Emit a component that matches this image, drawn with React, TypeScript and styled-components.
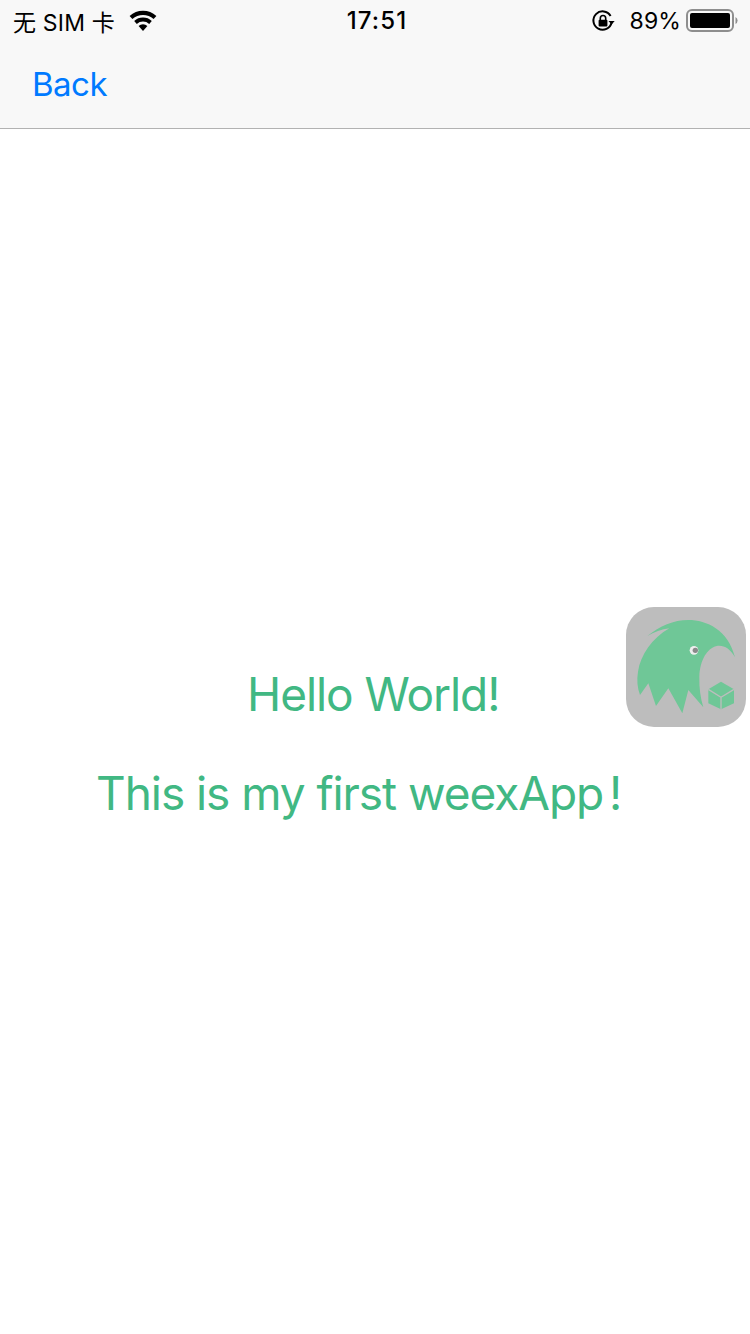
import React from "react";
import styled, { createGlobalStyle } from "styled-components";

const Global = createGlobalStyle`
  html, body { margin: 0; padding: 0; background: #fff; }
  body { font-family: Inter, "Noto Sans CJK SC", sans-serif; }
`;

const Page = styled.div`
  position: relative;
  width: 750px;
  height: 1334px;
  overflow: hidden;
  background: #fff;
`;

const Header = styled.header`
  background: #f8f8f8;
  border-bottom: 1px solid #b2b2b2;
  height: 128px;
`;

const StatusBar = styled.div`
  height: 41px;
  display: grid;
  grid-template-columns: 1fr auto 1fr;
  align-items: center;
  padding: 0 12px 0 13px;
  color: #000;
  font-size: 23px;
`;

const StatusLeft = styled.div`
  display: flex;
  align-items: center;
  gap: 13px;
`;

const Carrier = styled.span`
  font-family: Inter, "Noto Sans CJK SC", sans-serif;
  font-size: 23px;
  letter-spacing: 0.2px;
  white-space: pre;
`;

const Clock = styled.span`
  font-size: 24px;
  font-weight: 500;
  letter-spacing: 1.1px;
  margin-left: 3px;
`;

const StatusRight = styled.div`
  display: flex;
  align-items: center;
  justify-content: flex-end;
`;

const Percent = styled.span`
  font-size: 23px;
  letter-spacing: 0.1px;
  margin: 0 5px 0 15px;
`;

const NavBar = styled.nav`
  height: 87px;
  display: flex;
  align-items: center;
  padding-left: 32px;
`;

const BackLink = styled.a`
  color: #007aff;
  font-size: 33px;
  line-height: 87px;
  letter-spacing: -0.5px;
`;

const Content = styled.main`
  display: flex;
  flex-direction: column;
  padding-top: 535px;
`;

const Line = styled.p<{ $indent: number }>`
  margin: 0 0 39px;
  padding-left: ${(p) => p.$indent}px;
  color: #41b883;
  font-size: 46px;
  line-height: 60px;
  font-weight: 380;
  letter-spacing: -1.05px;
  white-space: nowrap;
`;

const TightTail = styled.span`
  word-spacing: -6px;
`;

const FloatingTile = styled.div`
  position: absolute;
  left: 626px;
  top: 607px;
  width: 120px;
  height: 120px;
  border-radius: 28px;
  background: #bdbdbd;
`;

const Wifi = () => (
  <svg width="30" height="22" viewBox="0 0 30 22" fill="#000">
    <path d="M15 21 l-4.4-5 a6.4 6.4 0 0 1 8.8 0z" />
    <path d="M8.8 13.9 L6.2 11 a13 13 0 0 1 17.6 0 l-2.6 2.9 a9.3 9.3 0 0 0-12.4 0z" />
    <path d="M4.4 9 L1.6 5.9 a20 20 0 0 1 26.8 0 L25.6 9 a16 16 0 0 0-21.2 0z" />
  </svg>
);

const RotationLock = () => (
  <svg width="24" height="24" viewBox="0 0 24 24" fill="none" stroke="#000">
    <path d="M20.6 13.5 A9.2 9.2 0 1 1 19.6 7" strokeWidth="2" />
    <path d="M17.5 12 h6.2 l-3.1 3.6z" fill="#000" stroke="none" />
    <path d="M9.3 11 V9.2 a2.7 2.7 0 0 1 5.4 0 V11" strokeWidth="1.6" />
    <rect x="7.6" y="10.8" width="8.8" height="6.8" rx="1" fill="#000" stroke="none" />
  </svg>
);

const Battery = () => (
  <svg width="52" height="25" viewBox="0 0 52 25">
    <rect x="1" y="2" width="46" height="21" rx="5" fill="none" stroke="#8e8e8e" strokeWidth="2" />
    <rect x="4" y="5" width="40" height="15" rx="2" fill="#000" />
    <path d="M49.5 9 a4 4 0 0 1 0 7z" fill="#8e8e8e" />
  </svg>
);

const BirdLogo = () => (
  <svg width="120" height="120" viewBox="18 21 360 360">
    <path
      fill="#6fc797"
      d="M82 108 C120 78 160 60 205 60 C260 60 325 90 345 172 C330 145 310 134 290 138 C262 144 240 180 238 230 C237 265 242 295 250 322 L205 270 L187 340 L145 265 L108 318 L85 250 L60 285 C52 262 50 240 54 215 C62 165 95 115 148 85 C125 88 102 96 82 108 Z"
    />
    <circle cx="222" cy="151" r="13" fill="#eeeeee" />
    <circle cx="226" cy="151" r="8" fill="#8a8a8a" />
    <path fill="#6fc797" d="M303 245 L342 268 V310 L303 328 L265 310 V268 Z" />
    <path d="M265 268 L303 292 L342 268 M303 292 V328" fill="none" stroke="#bdbdbd" strokeWidth="4" />
  </svg>
);

export default function App() {
  return (
    <Page>
      <Global />
      <Header>
        <StatusBar>
          <StatusLeft>
            <Carrier>无 SIM 卡</Carrier>
            <Wifi />
          </StatusLeft>
          <Clock>17:51</Clock>
          <StatusRight>
            <RotationLock />
            <Percent>89%</Percent>
            <Battery />
          </StatusRight>
        </StatusBar>
        <NavBar>
          <BackLink>Back</BackLink>
        </NavBar>
      </Header>
      <Content>
        <Line $indent={247}>Hello World!</Line>
        <Line $indent={96}>
          This is my first weexApp<TightTail> !</TightTail>
        </Line>
      </Content>
      <FloatingTile>
        <BirdLogo />
      </FloatingTile>
    </Page>
  );
}
